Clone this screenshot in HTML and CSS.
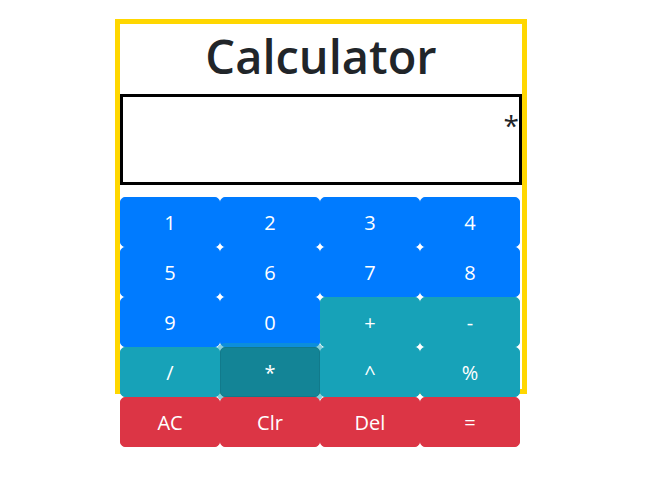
FILE: index.html
```html
<!DOCTYPE html>
<html lang="en">
<head>
<meta charset="utf-8">
<meta name="viewport" content="width=device-width, initial-scale=1">
<title>Calculator</title>
<link rel="stylesheet" href="styles.css">
</head>
<body>
<main class="calculator">
  <h1 class="title">Calculator</h1>
  <output class="display" aria-label="Result">*</output>
  <div class="keypad">
    <button type="button" class="key number">1</button>
    <button type="button" class="key number">2</button>
    <button type="button" class="key number">3</button>
    <button type="button" class="key number">4</button>
    <button type="button" class="key number">5</button>
    <button type="button" class="key number">6</button>
    <button type="button" class="key number">7</button>
    <button type="button" class="key number">8</button>
    <button type="button" class="key number">9</button>
    <button type="button" class="key number">0</button>
    <button type="button" class="key operator">+</button>
    <button type="button" class="key operator">-</button>
    <button type="button" class="key operator">/</button>
    <button type="button" class="key operator active">*</button>
    <button type="button" class="key operator">^</button>
    <button type="button" class="key operator">%</button>
    <button type="button" class="key action">AC</button>
    <button type="button" class="key action">Clr</button>
    <button type="button" class="key action">Del</button>
    <button type="button" class="key action">=</button>
  </div>
</main>
</body>
</html>
```
FILE: styles.css
```css
* {
  box-sizing: border-box;
}

body {
  min-height: 100vh;
  margin: 0;
  padding: 19px 14px 77px 0;
  background: #fff;
  color: #212529;
  font-family: "Segoe UI", "Open Sans", "Noto Sans", sans-serif;
}

.calculator {
  max-width: 412px;
  margin: 0 auto;
  border: 5px solid gold;
}

.title {
  margin: 0;
  padding: 2px 0 8px;
  font-size: 47px;
  font-weight: 600;
  line-height: 60px;
  text-align: center;
}

.display {
  display: block;
  min-height: 91px;
  padding: 4px 0;
  border: 3px solid #000;
  font-size: 28px;
  line-height: 48px;
  text-align: right;
}

/* The last row of keys hangs below the frame. */
.keypad {
  display: grid;
  grid-template-columns: repeat(4, 1fr);
  grid-auto-rows: 50px;
  margin: 12px 2px -58px 0;
}

.key {
  padding: 2px 0 0;
  border: 1px solid transparent;
  border-radius: 5px;
  color: #fff;
  font-family: inherit;
  font-size: 20px;
  line-height: 30px;
}

.number {
  border-color: #007bff;
  background: #007bff;
}

.operator {
  border-color: #17a2b8;
  background: #17a2b8;
}

.action {
  border-color: #dc3545;
  background: #dc3545;
}

.active {
  border-color: #117a8b;
  background: #138496;
  box-shadow: 0 0 0 4px rgba(23, 162, 184, 0.5);
}
```
